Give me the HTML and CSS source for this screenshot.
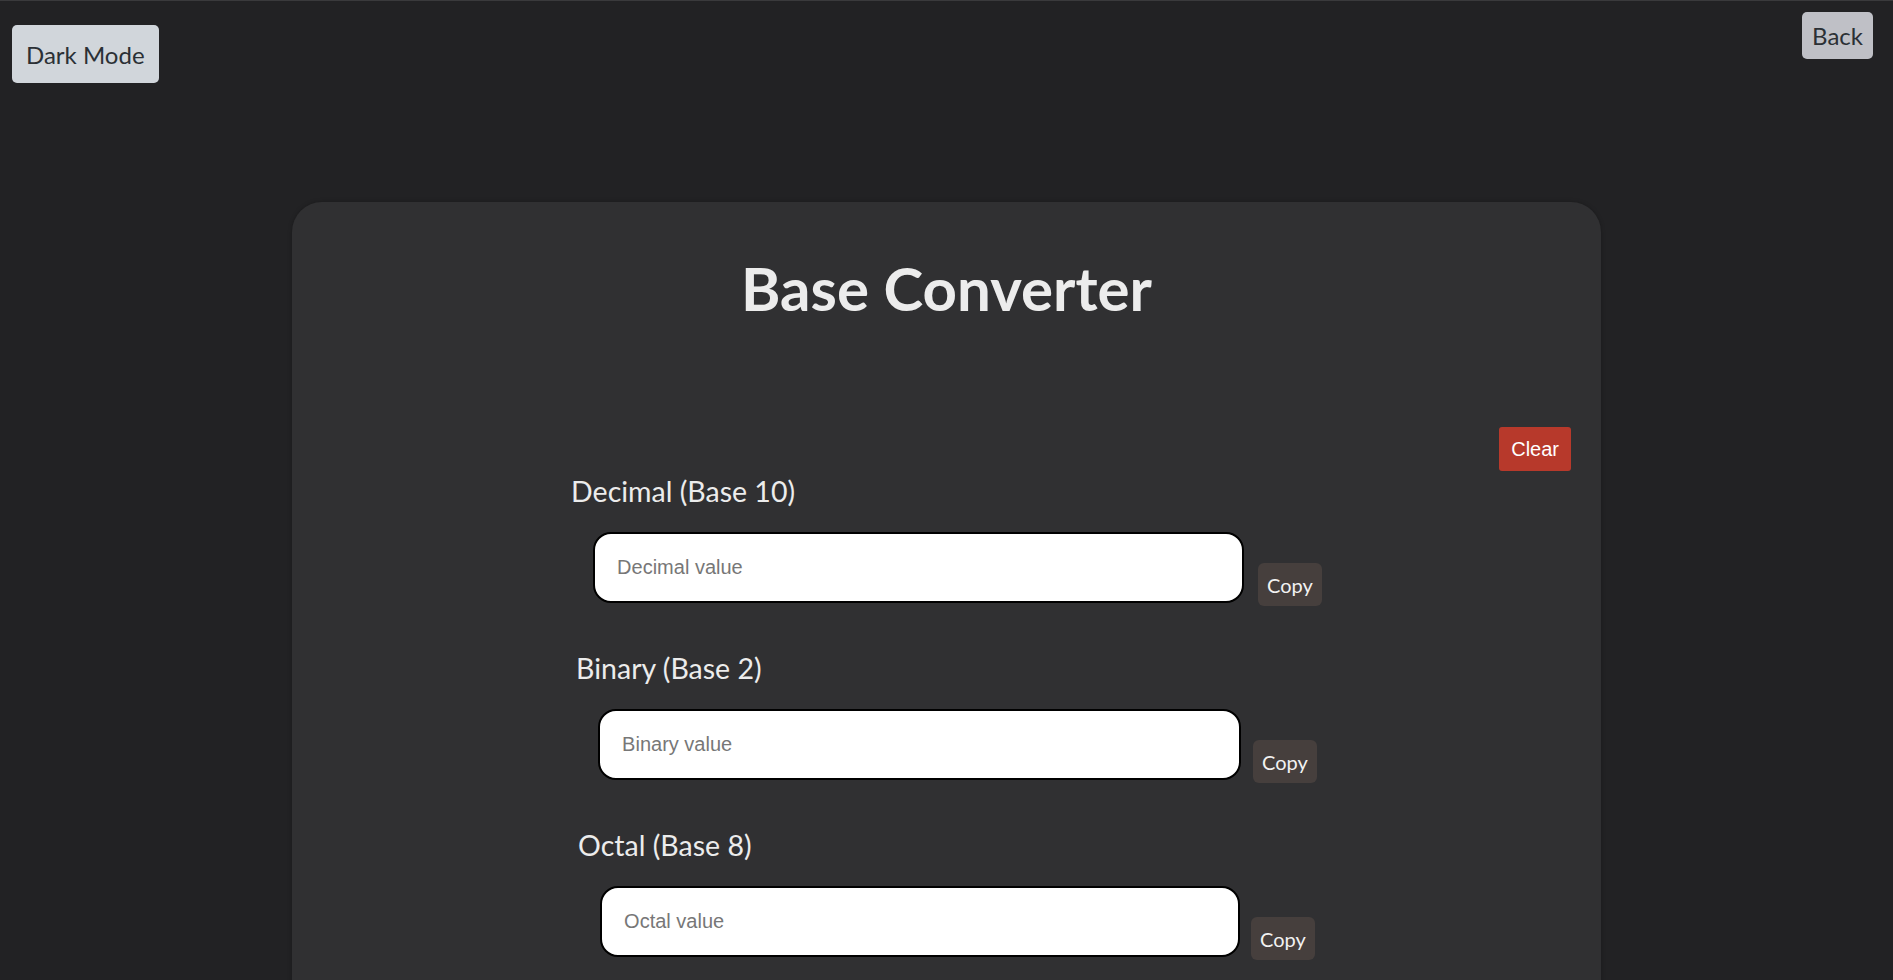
FILE: index.html
```html
<!DOCTYPE html>
<html lang="en">
<head>
<meta charset="utf-8">
<title>Base Converter</title>
<link rel="stylesheet" href="styles.css">
</head>
<body>
<header class="topbar">
  <button class="btn-mode">Dark Mode</button>
  <button class="btn-back">Back</button>
</header>
<main class="card">
  <h1 class="title">Base Converter</h1>
  <div class="clear-row">
    <button class="btn-clear">Clear</button>
  </div>
  <div class="row row-dec">
    <div class="field">
      <label class="label">Decimal (Base 10)</label>
      <input class="input" type="text" placeholder="Decimal value">
    </div>
    <button class="btn-copy">Copy</button>
  </div>
  <div class="row row-bin">
    <div class="field">
      <label class="label">Binary (Base 2)</label>
      <input class="input" type="text" placeholder="Binary value">
    </div>
    <button class="btn-copy">Copy</button>
  </div>
  <div class="row row-oct">
    <div class="field">
      <label class="label">Octal (Base 8)</label>
      <input class="input" type="text" placeholder="Octal value">
    </div>
    <button class="btn-copy">Copy</button>
  </div>
</main>
</body>
</html>
```
FILE: styles.css
```css
* { box-sizing: border-box; }

html {
  background: #222224;
}

body {
  margin: 0;
  background: #222224;
  border-top: 1px solid #3a3a3c;
  font-family: Lato, "Noto Sans", sans-serif;
  color: #ececec;
}

.topbar {
  display: flex;
  justify-content: space-between;
  align-items: flex-start;
  padding: 11px 20px 0 12px;
  height: 82px;
}

.btn-mode,
.btn-back {
  font-family: Lato, "Noto Sans", sans-serif;
  font-size: 24px;
  color: #2b3035;
  border: none;
  border-radius: 5px;
  cursor: pointer;
}

.btn-mode {
  margin-top: 13px;
  height: 58px;
  padding: 0 14px;
  background: #d1d6db;
}

.btn-back {
  height: 47px;
  padding: 0 10px;
  background: #bfc0c6;
}

.card {
  width: 1309px;
  margin: 119px auto 0;
  background: #303032;
  border-radius: 30px;
  padding: 51px 30px 80px;
  box-shadow: 0 0 4px rgba(0, 0, 0, 0.25);
}

.title {
  margin: 0;
  text-align: center;
  font-size: 60px;
  line-height: 70px;
  font-weight: 700;
  color: #ececec;
}

.clear-row {
  display: flex;
  justify-content: flex-end;
  margin-top: 104px;
}

.btn-clear {
  font-family: "Liberation Sans", Arial, sans-serif;
  font-size: 20px;
  line-height: 24px;
  padding: 10px 12px;
  color: #fff;
  background: #b7392b;
  border: none;
  border-radius: 3px;
}

.row {
  display: flex;
  justify-content: center;
  align-items: flex-end;
  margin-top: 48px;
  gap: 14px;
}

.row-dec { margin-top: 3px; }

.field {
  display: flex;
  flex-direction: column;
}

.label {
  font-size: 28.5px;
  line-height: 34px;
  color: #ececec;
  margin-bottom: 24px;
}

.input {
  width: 651px;
  height: 71px;
  margin-left: 22px;
  border: 2px solid #000;
  border-radius: 18px;
  background: #fff;
  padding: 0 22px;
  font-family: "Liberation Sans", Arial, sans-serif;
  font-size: 20px;
  color: #222;
  outline: none;
}

.input::placeholder {
  color: #777;
}

.row-bin { gap: 12px; }
.row-bin .input { width: 643px; }
.row-oct { gap: 11px; }
.row-oct .input { width: 640px; }

.btn-copy {
  font-family: Lato, "Noto Sans", sans-serif;
  font-size: 20px;
  height: 43px;
  padding: 0 9px;
  margin-bottom: -3px;
  color: #f2f2f2;
  background: #463f3d;
  border: none;
  border-radius: 6px;
}
```
